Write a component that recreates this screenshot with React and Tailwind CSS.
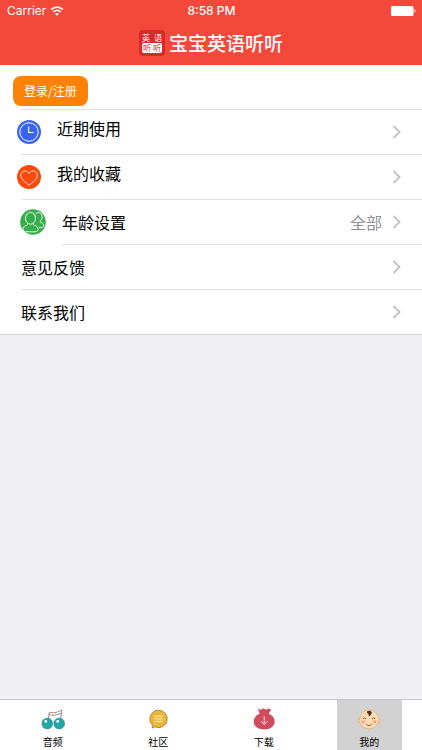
import React, { useState } from "react";

const ClockIcon = () => (
  <svg viewBox="0 0 24 24" className="w-6 h-6" fill="none">
    <circle cx="12" cy="12" r="12" fill="#3a63f0" />
    <circle cx="12" cy="12" r="9.2" stroke="white" strokeWidth="1" />
    <path d="M11.7 6.5v6h5" stroke="white" strokeWidth="1.1" />
  </svg>
);

const HeartIcon = () => (
  <svg viewBox="0 0 24 24" className="w-6 h-6" fill="none">
    <circle cx="12" cy="12" r="12" fill="#fb4a0c" />
    <path
      d="M12 20.3C8.6 17.6 3.8 14.3 3.8 10.2c0-2.6 1.9-4.3 4.1-4.3 1.8 0 3.3 1 4.1 2.7.8-1.7 2.3-2.7 4.1-2.7 2.2 0 4.1 1.7 4.1 4.3 0 4.1-4.8 7.4-8.2 10.1z"
      stroke="#ffe3d8"
      strokeWidth="0.9"
    />
  </svg>
);

const PeopleIcon = () => (
  <svg viewBox="0 0 26 26" className="w-[26px] h-[26px]" fill="none">
    <circle cx="13" cy="13" r="12.8" fill="#35ae4b" />
    <g stroke="#e6f8e9" strokeWidth="1" strokeLinejoin="round">
      <path d="M15.5 4.800c.8-.9 1.800-1.300 2.900-1.300 2.300 0 3.700 1.900 3.700 4.300 0 2-.8 3.700-2.200 4.600.1.800.7 1.200 1.700 1.500 1.600.5 2.200 1.500 2.200 2.800 0 1.200-.8 1.800-2 1.800H19" />
      <ellipse cx="10.500" cy="9.300" rx="5" ry="5.900" />
      <path d="M7.800 14.300c0 1.500-.6 1.900-1.900 2.300-2 .7-2.900 1.900-2.900 3.500 0 1.900 1.100 2.700 2.900 2.700h9.200c1.800 0 2.900-.8 2.900-2.700 0-1.600-.9-2.800-2.900-3.500-1.300-.4-1.900-.8-1.900-2.300" />
    </g>
  </svg>
);

const ChevronIcon = () => (
  <svg
    viewBox="0 0 10 16"
    className="w-[10px] h-4 shrink-0"
    fill="none"
    stroke="#c3c3c7"
    strokeWidth="1.9"
  >
    <path d="M1.500 2l6 6-6 6" />
  </svg>
);

const CherryIcon = () => (
  <svg viewBox="0 0 24 24" className="w-6 h-6" fill="none">
    <path
      d="M7.300 11.500L8.300 4.200c3.500 1.300 7.500.6 12.500-2.200l-1.200 9.500M8 6.600c3.500 1.200 7.500.7 12.300-1.600"
      stroke="#8c6a68"
      strokeWidth="0.8"
    />
    <circle cx="6.300" cy="15.500" r="5.500" fill="#22a7a7" stroke="#3b7f80" strokeWidth="0.4" />
    <circle cx="18.200" cy="15.500" r="5.500" fill="#22a7a7" stroke="#3b7f80" strokeWidth="0.4" />
    <circle cx="4.800" cy="13.400" r="1.400" fill="white" />
    <circle cx="16.700" cy="13.400" r="1.400" fill="white" />
  </svg>
);

const ChatIcon = () => (
  <svg viewBox="0 0 24 24" className="w-6 h-6" fill="none">
    <path
      d="M12.500 2.200a8.700 8.700 0 1 1-3.600 16.600c-.9.700-1.800 1-3 1.200.6-.9.8-1.700.7-2.800A8.700 8.700 0 0 1 12.500 2.200z"
      fill="#edb73b"
      stroke="#8c7448"
      strokeWidth="0.8"
    />
    <path d="M8.300 8.200h8.500M8.300 10.800h8.500M8.300 13.400h8.500" stroke="#fff0c4" strokeWidth="1" />
  </svg>
);

const BagIcon = () => (
  <svg viewBox="0 0 24 24" className="w-6 h-6" fill="none">
    <path
      d="M6 .8l2.800 1L11.500.3l2.600 1.500L16.500.4l2.600 1.200-2.300 4.200c3.700 1.600 5.900 4.300 5.900 7.700 0 4.700-4.300 8-10.500 8s-10.500-3.300-10.500-8c0-3.400 2.200-6.100 5.900-7.700z"
      fill="#cf4c5e"
    />
    <path d="M12.200 8.300v8M8.800 13l3.400 3.500 3.400-3.500" stroke="#ffdbe0" strokeWidth="1" />
  </svg>
);

const BabyIcon = () => (
  <svg viewBox="0 0 24 24" className="w-6 h-6" fill="none">
    <circle cx="3" cy="12.500" r="2.200" fill="#fbd6a5" stroke="#cfa173" strokeWidth="0.5" />
    <circle cx="21" cy="12.500" r="2.200" fill="#fbd6a5" stroke="#cfa173" strokeWidth="0.5" />
    <circle cx="12" cy="11.500" r="9.500" fill="#fddcaf" stroke="#cfa173" strokeWidth="0.5" />
    <path d="M10 3.500c1.600-1.200 4.300-.7 4.700 1 .3 1.700-1.300 2.500-2.300 4-1.200-.9-.3-1.700-1-2.600-.6-.7-1.800-.9-1.400-2.400z" fill="#5a2d20" />
    <path d="M5.800 10.800q1.600-1.800 3.200 0M15 10.800q1.600-1.800 3.200 0" stroke="#7a4a35" strokeWidth="0.9" />
    <path d="M9 16q3 3.200 6 0" stroke="#b5543c" strokeWidth="1" />
    <circle cx="6.300" cy="13.800" r="1.500" fill="#f79c8c" />
    <circle cx="17.700" cy="13.800" r="1.500" fill="#f79c8c" />
  </svg>
);

const tabs = [
  { name: "音频", icon: <CherryIcon /> },
  { name: "社区", icon: <ChatIcon /> },
  { name: "下载", icon: <BagIcon /> },
  { name: "我的", icon: <BabyIcon /> },
];

function StatusBar() {
  return (
    <div className="grid grid-cols-3 items-center h-[22px] pl-[7px] pr-[6px] text-xs font-['Inter','Noto_Sans_CJK_SC',sans-serif]">
      <div className="flex items-center gap-1">
        <span>Carrier</span>
        <svg viewBox="0 0 14 10" className="w-[14px] h-[10px]" fill="none">
          <path d="M1 3.700q6-5 12 0" stroke="white" strokeWidth="1.700" />
          <path d="M3.200 6q3.800-3.100 7.600 0" stroke="white" strokeWidth="1.600" />
          <path d="M5 7.700q2-1.500 4 0L7 9.800z" fill="white" />
        </svg>
      </div>
      <div className="text-center font-medium">8:58 PM</div>
      <svg viewBox="0 0 25 10" className="w-[25px] h-[10px] justify-self-end" fill="white">
        <rect width="22.500" height="10" rx="1.500" />
        <path d="M23.300 3.300c1.600.3 1.600 3.100 0 3.400z" />
      </svg>
    </div>
  );
}

function Logo() {
  return (
    <div className="flex flex-col items-center justify-center w-[26px] h-[26px] rounded bg-[#d9292b] text-[8px] leading-[10px]">
      <div className="flex w-full justify-around px-px">
        <span>英</span>
        <span>语</span>
      </div>
      <div className="flex w-5 justify-around rounded-xs bg-white text-[#d9292b]">
        <span>听</span>
        <span>听</span>
      </div>
    </div>
  );
}

function MinePage() {
  const [activeTab, setActiveTab] = useState("我的");

  return (
    <div className="flex flex-col min-h-screen bg-[#efeff4] text-black font-['Noto_Sans_CJK_SC',sans-serif]">
      {/* Header */}
      <header className="bg-[#f4493a] text-white h-[65px]">
        <StatusBar />
        <div className="flex items-center justify-center gap-1 h-[42px]">
          <Logo />
          <h1 className="text-[19px] leading-6 font-medium">宝宝英语听听</h1>
        </div>
      </header>

      {/* Menu */}
      <main className="flex-1">
        <div className="bg-white border-b border-[#d6d6da]">
          <div className="h-11 pt-[11px] pl-[13px]">
            <button className="h-[30px] px-[11px] rounded-lg bg-[#ff8204] text-white text-xs">
              登录/注册
            </button>
          </div>
          <ul className="text-base">
            <li>
              <div className="ml-[21px] border-t border-[#e2e2e5]" />
              <a href="#recent" className="flex items-center h-11 pl-[17px] pr-5">
                <ClockIcon />
                <span className="flex-1 pl-4 pb-2">近期使用</span>
                <ChevronIcon />
              </a>
            </li>
            <li>
              <div className="ml-[21px] border-t border-[#e2e2e5]" />
              <a href="#favorites" className="flex items-center h-11 pl-[17px] pr-5">
                <HeartIcon />
                <span className="flex-1 pl-4 pb-2">我的收藏</span>
                <ChevronIcon />
              </a>
            </li>
            <li>
              <div className="ml-[21px] border-t border-[#e2e2e5]" />
              <a href="#age" className="flex items-center h-11 pl-5 pr-5">
                <PeopleIcon />
                <span className="flex-1 pl-4">年龄设置</span>
                <span className="pr-[10px] text-[#8e8e93]">全部</span>
                <ChevronIcon />
              </a>
            </li>
            <li>
              <div className="ml-[61px] border-t border-[#e2e2e5]" />
              <a href="#feedback" className="flex items-center h-11 pl-[21px] pr-5">
                <span className="flex-1">意见反馈</span>
                <ChevronIcon />
              </a>
            </li>
            <li>
              <div className="ml-[21px] border-t border-[#e2e2e5]" />
              <a href="#contact" className="flex items-center h-11 pl-[21px] pr-5">
                <span className="flex-1">联系我们</span>
                <ChevronIcon />
              </a>
            </li>
          </ul>
        </div>
      </main>

      {/* Tab Bar */}
      <nav className="grid grid-cols-4 h-[51px] bg-white border-t border-[#c9c9cc]">
        {tabs.map((tab) => (
          <button
            key={tab.name}
            onClick={() => setActiveTab(tab.name)}
            className={`flex flex-col items-center justify-self-center w-[65px] pt-2 text-[10px] leading-4 ${
              activeTab === tab.name ? "bg-[#d2d2d2]" : ""
            }`}
          >
            {tab.icon}
            <span className="pt-[2px]">{tab.name}</span>
          </button>
        ))}
      </nav>
    </div>
  );
}

export default MinePage;
